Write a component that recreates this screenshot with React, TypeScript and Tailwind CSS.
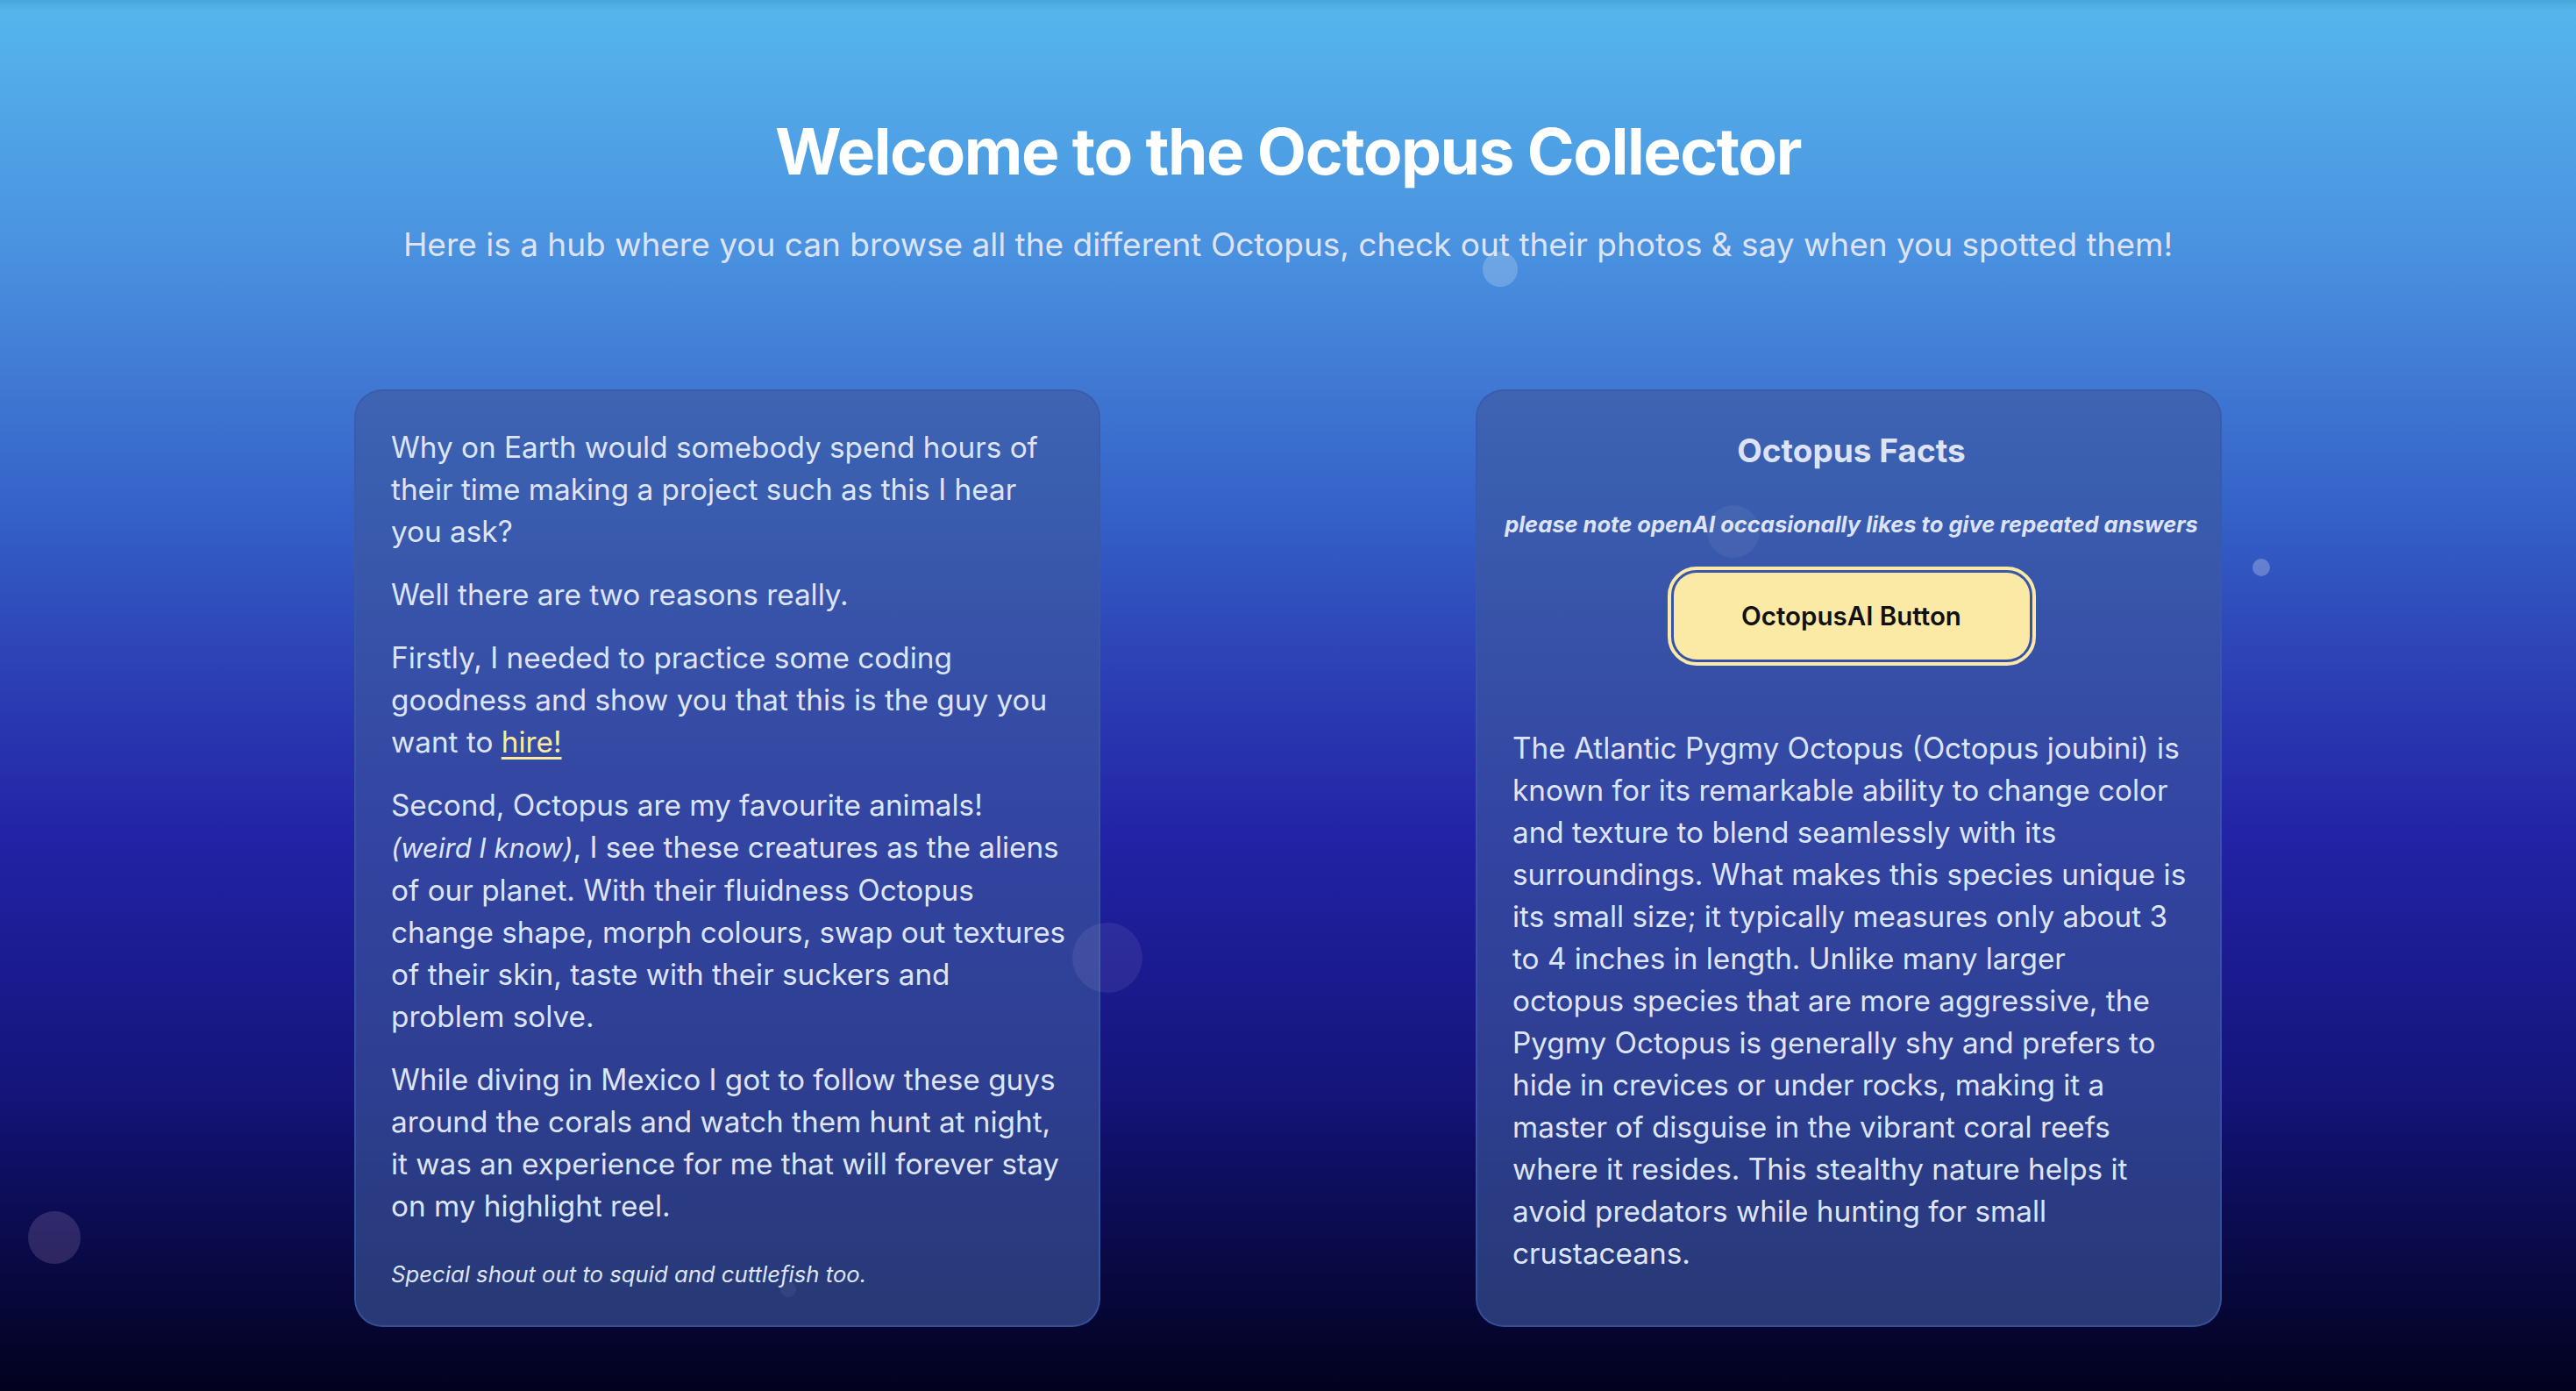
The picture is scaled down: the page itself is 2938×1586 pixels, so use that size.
import React from "react";

const bubbles = [
  { cls: "left-[1691px] top-[287px] w-[40px] h-[40px] bg-white/20" },
  { cls: "left-[1947px] top-[576px] w-[60px] h-[60px] bg-white/[0.06]" },
  { cls: "left-[890px] top-[1461px] w-[18px] h-[18px] bg-white/[0.05]" },
  { cls: "left-[32px] top-[1381px] w-[60px] h-[60px] bg-[rgba(255,210,255,0.15)]" },
  { cls: "left-[2569px] top-[637px] w-[20px] h-[20px] bg-white/25" },
  { cls: "left-[1223px] top-[1052px] w-[80px] h-[80px] bg-[rgba(255,225,255,0.08)]" },
];

export default function App() {
  return (
    <div
      className="relative h-[1586px] w-full overflow-hidden bg-[linear-gradient(to_bottom,#4aa6d8_0%,#55b5ec_0.8%,#4a92e0_17.7%,#3f76d2_28.4%,#3462c8_36.6%,#2e46b8_46%,#2223a6_60%,#14147a_78.8%,#10106a_82%,#02021e_100%)]"
      style={{ fontFamily: "Inter, 'Liberation Sans', sans-serif" }}
    >
      <div className="relative z-10 flex flex-col items-center">
        <h1 className="pt-[128px] text-[73px] font-bold leading-[89px] tracking-[-0.02em] text-white">
          Welcome to the Octopus Collector
        </h1>
        <p className="mt-[35px] text-[37px] leading-[54px] text-[#dde3f3]">
          Here is a hub where you can browse all the different Octopus, check out their photos &amp; say when you spotted them!
        </p>

        <div className="mt-[138px] grid w-[2130px] grid-cols-2 gap-[428px]">
          <div className="rounded-[32px] border-2 border-[#3a5aab]/70 bg-[rgba(62,89,158,0.62)] py-10 pl-10 pr-[34px] text-[33.3px] leading-[48px] text-[#dde4f6]">
            <p className="mb-6">
              Why on Earth would somebody spend hours of their time making a project such as this I hear you ask?
            </p>
            <p className="mb-6">Well there are two reasons really.</p>
            <p className="mb-6">
              Firstly, I needed to practice some coding goodness and show you that this is the guy you want to{" "}
              <a className="text-[#fce9a0] underline underline-offset-[5px]" href="#">
                hire!
              </a>
            </p>
            <p className="mb-6">
              Second, Octopus are my favourite animals!
              <br />
              <em className="text-[31px] italic">(weird I know)</em>, I see these creatures as the aliens of our planet. With their fluidness Octopus change shape, morph colours, swap out textures of their skin, taste with their suckers and problem solve.
            </p>
            <p>
              While diving in Mexico I got to follow these guys around the corals and watch them hunt at night, it was an experience for me that will forever stay on my highlight reel.
            </p>
            <p className="mt-9 text-[25.7px] italic leading-[36px]">Special shout out to squid and cuttlefish too.</p>
          </div>

          <div className="flex flex-col items-center rounded-[32px] border-2 border-[#3a5aab]/70 bg-[rgba(62,89,158,0.62)] py-10 pl-10 pr-[34px] text-[#dde4f6]">
            <h2 className="text-[37px] font-bold leading-[56px] text-[#dde3f5]">Octopus Facts</h2>
            <p className="mt-[38px] whitespace-nowrap text-[25.5px] font-bold italic leading-[36px] text-[#dde3f5]">
              please note openAI occasionally likes to give repeated answers
            </p>
            <button className="mt-[37px] h-[99px] w-[406px] rounded-[26px] bg-[#fbe9a6] text-[29.5px] font-semibold text-[#111111] outline-[4px] outline-offset-[3px] outline-[#fbe9a6]">
              OctopusAI Button
            </button>
            <p className="mt-[77px] self-stretch text-[33.3px] leading-[48px]">
              The Atlantic Pygmy Octopus (Octopus joubini) is known for its remarkable ability to change color and texture to blend seamlessly with its surroundings. What makes this species unique is its small size; it typically measures only about 3 to 4 inches in length. Unlike many larger
              <br />
              octopus species that are more aggressive, the Pygmy Octopus is generally shy and prefers to hide in crevices or under rocks, making it a master of disguise in the vibrant coral reefs where it resides. This stealthy nature helps it avoid predators while hunting for small crustaceans.
            </p>
          </div>
        </div>
      </div>

      {bubbles.map((b, i) => (
        <div key={i} className={`pointer-events-none absolute z-20 rounded-full ${b.cls}`} />
      ))}
    </div>
  );
}
